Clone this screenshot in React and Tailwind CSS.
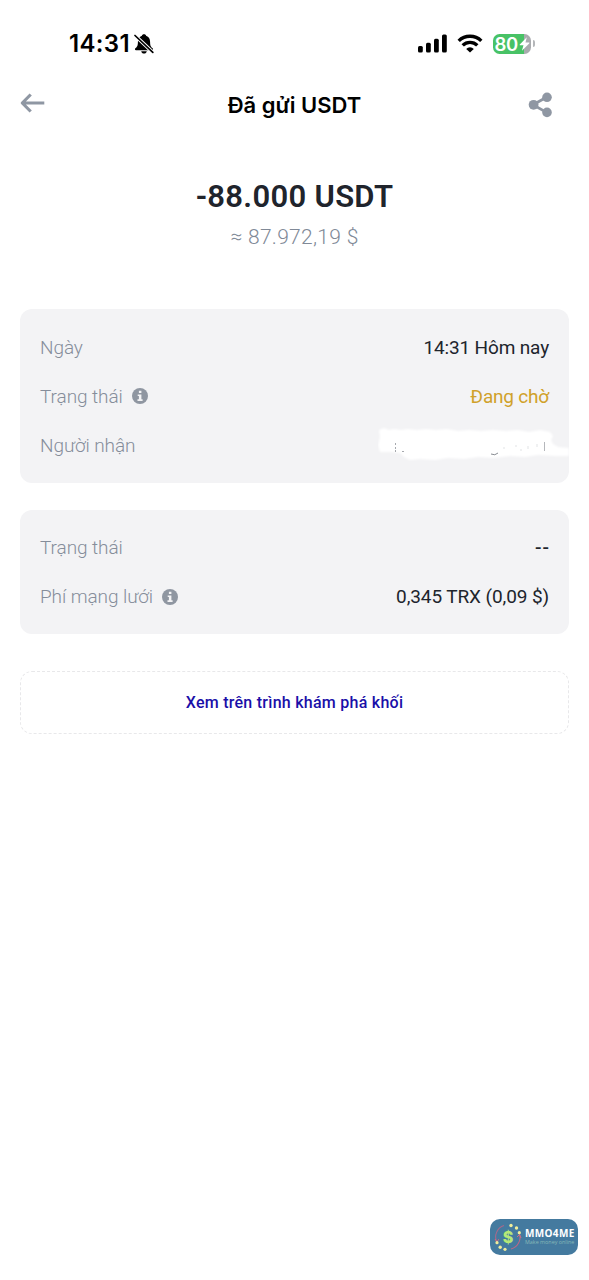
function BellOffIcon() {
  return (
    <svg className="w-5 h-5" viewBox="0 0 20 20" fill="none">
      <path d="M10 .3c-1.200 0-1.900.6-2.100 1.400C5.200 2.500 3.900 4.900 3.900 8c0 3.700-.7 4.700-2.500 6.300-.8.7-.5 2 .6 2h16c1.100 0 1.400-1.300.6-2-1.800-1.600-2.500-2.600-2.500-6.300 0-3.100-1.300-5.500-4-6.300C11.900.9 11.200.3 10 .3Z" fill="black" />
      <path d="M7.200 17.200h5.600c-.3 1.400-1.400 2.300-2.800 2.300s-2.500-.9-2.800-2.300Z" fill="black" />
      <path d="M.8 1.300 19 18.500" stroke="white" strokeWidth="3.600" />
      <path d="M1 1.500 18.800 18.300" stroke="black" strokeWidth="1.700" strokeLinecap="round" />
    </svg>
  );
}

function SignalIcon() {
  return (
    <svg className="w-[29px] h-[19px]" viewBox="0 0 29 19">
      <rect x="0" y="12" width="4.800" height="6.500" rx="1.500" />
      <rect x="8" y="8.700" width="4.800" height="9.800" rx="1.500" />
      <rect x="16" y="4.700" width="4.800" height="13.800" rx="1.500" />
      <rect x="24" y="0.500" width="4.800" height="18" rx="1.500" />
    </svg>
  );
}

function WifiIcon() {
  return (
    <svg className="w-[26px] h-[19px]" viewBox="0 0 26 19" fill="none" stroke="black" strokeWidth="3.400">
      <path d="M1.700 6.900a16.200 16.200 0 0 1 22.600 0" />
      <path d="M5.700 11.400a10.400 10.400 0 0 1 14.600 0" />
      <path d="M13 18.600 9.200 14.900a5.400 5.400 0 0 1 7.600 0Z" fill="black" stroke="none" />
    </svg>
  );
}

function Battery() {
  return (
    <div className="flex items-center gap-[2px]">
      <div className="relative w-[38px] h-5 rounded-[6.500px] bg-linear-to-r from-[#48c266] from-[81%] to-[#a9abae] to-[81%] pl-[2px] flex items-center">
        <span className="font-['Inter'] text-[18.500px] leading-5 font-semibold text-white tracking-[-0.4px]">80</span>
        <svg className="absolute left-[26px] top-[3px] w-[11px] h-[14px]" viewBox="0 0 11 14">
          <path d="M7.800.2.8 7.500c-.3.400-.1.800.4.800h3.300L2.900 13.700 10.200 6.400c.4-.4.200-.9-.3-.9H6.500Z" fill="white" />
        </svg>
      </div>
      <div className="w-[2.500px] h-[7px] rounded-r-full bg-[#b4b6b9]" />
    </div>
  );
}

function BackIcon() {
  return (
    <svg className="w-[25px] h-5 mb-1" viewBox="0 0 25 20" fill="none" stroke="#8f97a3" strokeWidth="3.200">
      <path d="M10.700 1.500 2.300 10l8.400 8.500M2.500 10H24.300" strokeLinejoin="round" />
    </svg>
  );
}

function ShareIcon() {
  return (
    <svg className="w-6 h-[26px]" viewBox="0 0 24 26" fill="#8f97a3">
      <path d="M18.500 5.200 5 12.800l13.500 7.600" fill="none" stroke="#8f97a3" strokeWidth="2.800" />
      <circle cx="19" cy="5.300" r="4.800" />
      <circle cx="5.600" cy="12.800" r="4.900" />
      <circle cx="19" cy="20.400" r="4.800" />
    </svg>
  );
}

function InfoIcon() {
  return (
    <svg className="w-4 h-4" viewBox="0 0 16 16">
      <circle cx="8" cy="8" r="8" fill="#8f96a1" />
      <path d="M6.900 2.700h2.500v2.300H6.900ZM5.700 6.400h3.700v4.800h1.200v1.700H5.500v-1.700h1.400V8H5.700Z" fill="#f3f3f5" />
    </svg>
  );
}

// Brushed-out recipient address
function HiddenAddress() {
  return (
    <div className="relative w-[171px] h-[25px]">
      <svg className="absolute left-0 -top-[7px] w-[191px] h-10 max-w-none" viewBox="0 0 191 40">
        <path
          className="blur-[1px]"
          d="M1 3 6 1 11 3 16 2 23 3 30 2 39 3 48 2 58 3 69 2 80 4 91 3 103 4 115 3 128 4 140 3 151 5 162 3 172 5 175 9 173 13 175 17 180 20 191 21V29L178 29 160 28 147 30 132 29 116 31 100 30 86 32 70 31 57 33 42 32 32 33 26 30 22 26 12 25 2 25 0 18 2 10Z"
          fill="white"
        />
        <g stroke="#6b7078" fill="none" strokeWidth="1">
          <path d="M17.500 16v2M17.500 20v2M17.500 23v2M24 24.500h2" opacity=".6" />
          <path d="M113 27q4 2 7-1" opacity=".8" />
          <path d="M126 22v-2M138 18v2M142 23h2M150 19v3M159 17v3" opacity=".2" />
          <path d="M166.500 15v9" opacity=".5" />
        </g>
      </svg>
    </div>
  );
}

function Row({ label, info, children }) {
  return (
    <div className="flex items-center justify-between h-[25px]">
      <div className="flex items-center gap-[9px] text-[#858d9a] font-[350]">
        <span className="pt-0.5 tracking-[-0.08px]">{label}</span>
        {info && <InfoIcon />}
      </div>
      <div className="pt-0.5 whitespace-nowrap">{children}</div>
    </div>
  );
}

function Watermark() {
  return (
    <div className="w-[88px] h-9 rounded-[10px] bg-[#447a9f] flex items-center pl-1">
      <svg className="w-7 h-7 shrink-0" viewBox="0 0 28 28" fill="none">
        <path d="M10 2.500A12 12 0 0 0 2.800 19" stroke="#a8688a" strokeWidth="1.100" />
        <path d="M17 26A12 12 0 0 0 25.500 11" stroke="#bd6785" strokeWidth="1.100" />
        <path d="m23 14 2.500-2.500L27 15M1 16l2 3 1.800-2.800" stroke="#d16b83" strokeWidth="1" />
        <g fill="#f0ed9a">
          <circle cx="17" cy="2.500" r="1.700" />
          <circle cx="22.500" cy="5" r="1.700" />
          <circle cx="25.300" cy="9.700" r="1.600" />
          <circle cx="3" cy="19.700" r="1.600" />
          <circle cx="6.200" cy="24.300" r="1.700" />
          <circle cx="11" cy="26.300" r="1.600" />
        </g>
        <text x="14" y="19.500" textAnchor="middle" fontSize="16" fontWeight="800" fontFamily="Inter, sans-serif" fill="#b5e878">$</text>
      </svg>
      <div className="ml-[3px] font-['Open_Sans'] whitespace-nowrap">
        <div className="text-[10px] leading-[10px] font-bold text-white tracking-[0.35px]">MMO4ME</div>
        <div className="text-[5.400px] leading-[8px] text-[#86b9b7]">Make money online</div>
      </div>
    </div>
  );
}

export default function App() {
  return (
    <div className="w-[589px] h-[1280px] bg-white flex flex-col overflow-hidden font-['Roboto',sans-serif] text-[#20242c]">
      {/* Status bar */}
      <div className="h-[87px] pl-[69px] pr-[54px] flex items-center justify-between">
        <div className="flex items-center gap-1 text-black">
          <span className="font-['Inter'] text-[24px] font-semibold tracking-[0.35px]">14:31</span>
          <BellOffIcon />
        </div>
        <div className="flex items-center gap-[10px]">
          <SignalIcon />
          <WifiIcon />
          <Battery />
        </div>
      </div>

      {/* Header */}
      <div className="h-9 pl-5 pr-9 grid grid-cols-[25px_1fr_25px] items-center">
        <BackIcon />
        <h1 className="font-['Inter'] text-[22px] font-semibold text-black text-center pl-4">Đã gửi USDT</h1>
        <ShareIcon />
      </div>

      {/* Amount */}
      <div className="mt-[53px] flex flex-col items-center">
        <div className="text-[31px] leading-[42px] font-semibold tracking-[0.3px]">-88.000 USDT</div>
        <div className="text-[21px] leading-[38px] font-[350] text-[#808997] tracking-[0.3px]">≈ 87.972,19 $</div>
      </div>

      <div className="mt-[53px] mx-5 flex flex-col text-[19px]">
        <div className="h-[174px] rounded-xl bg-[#f3f3f5] px-5 flex flex-col justify-center gap-6">
          <Row label="Ngày">
            <span className="tracking-[-0.15px]">14:31 Hôm nay</span>
          </Row>
          <Row label="Trạng thái" info>
            <span className="text-[#d0a12a] tracking-[-0.2px]">Đang chờ</span>
          </Row>
          <Row label="Người nhận">
            <HiddenAddress />
          </Row>
        </div>

        <div className="mt-[27px] h-[124px] rounded-xl bg-[#f3f3f5] px-5 flex flex-col justify-center gap-6">
          <Row label="Trạng thái">
            <span className="tracking-[1px] -mr-px font-medium">--</span>
          </Row>
          <Row label="Phí mạng lưới" info>
            <span className="tracking-[-0.1px]">0,345 TRX (0,09 $)</span>
          </Row>
        </div>

        <button className="mt-[37px] h-[63px] rounded-xl border border-dashed border-[#e8e8ea] text-[16px] tracking-[0.26px] font-medium text-[#1a0fa8]">
          Xem trên trình khám phá khối
        </button>
      </div>

      <div className="mt-auto mb-[25px] mr-[11px] self-end">
        <Watermark />
      </div>
    </div>
  );
}
